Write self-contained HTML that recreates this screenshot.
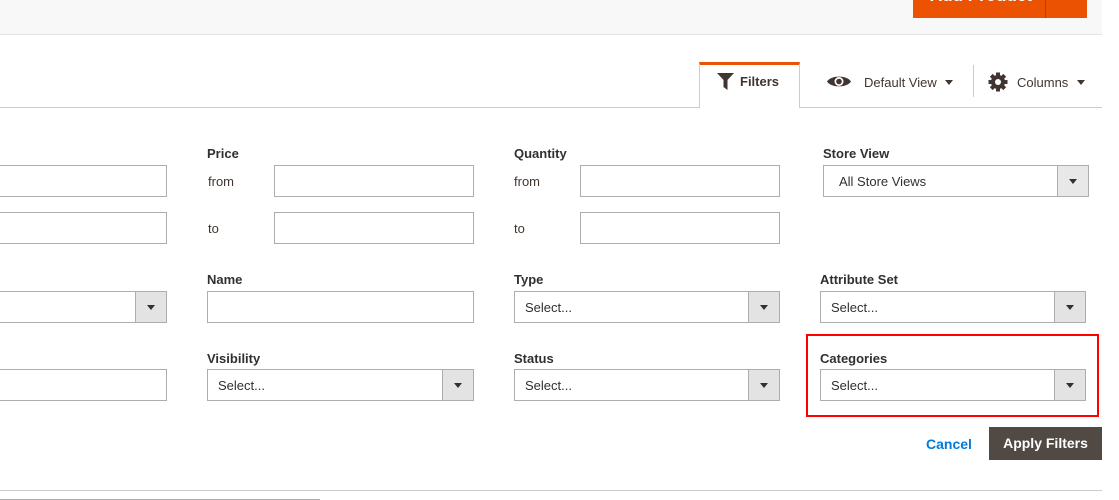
<!DOCTYPE html>
<html><head><style>
*{box-sizing:border-box;margin:0;padding:0}
body{width:1119px;height:500px;position:relative;overflow:hidden;background:#fff;font-family:"Liberation Sans",sans-serif;color:#303030}
.a{position:absolute}
.lbl{position:absolute;font-size:13px;font-weight:bold;color:#303030}
.t{position:absolute;font-size:13px;color:#41362f}
.in{position:absolute;height:32px;border:1px solid #adadad;background:#fff}
.sel{position:absolute;height:32px;border:1px solid #adadad;background:#fff;font-size:13px;color:#303030;padding:8px 0 0 10px}
.sel .ar{position:absolute;right:0;top:0;width:31px;height:30px;background:#e3e3e3;border-left:1px solid #adadad}
.sel .ar:after{content:"";position:absolute;left:11px;top:13px;border-left:4px solid transparent;border-right:4px solid transparent;border-top:5px solid #303030}
</style></head><body>
<div class="a" style="left:0;top:0;width:1102px;height:35px;background:#f8f8f8;border-bottom:1px solid #e3e3e3"></div>
<div class="a" style="left:913px;top:0;width:174px;height:18px;background:#eb5202;overflow:hidden">
  <div class="a" style="left:17px;top:-14px;font-size:17px;font-weight:bold;color:#fff;white-space:nowrap">Add Product</div>
  <div class="a" style="left:148px;top:-14px;font-size:17px;font-weight:bold;color:#fff">+</div>
</div>
<div class="a" style="left:1045px;top:0;width:1px;height:18px;background:#b84002"></div>

<div class="a" style="left:0;top:107px;width:1102px;height:1px;background:#ccc"></div>
<div class="a" style="left:699px;top:62px;width:101px;height:46px;background:#fff;border:1px solid #ccc;border-top:3px solid #eb5202;border-bottom:none"></div>
<svg class="a" style="left:717px;top:73px" width="18" height="17" viewBox="0 0 18 17"><path d="M0 0H17L10.5 7V17L6.5 14V7Z" fill="#41362f"/></svg>
<div class="a" style="left:740px;top:74px;font-size:13px;font-weight:bold;color:#41362f">Filters</div>
<svg class="a" style="left:827px;top:74px" width="24" height="15" viewBox="0 0 24 15"><path d="M0 7.5C4 1 20 1 24 7.5C20 14 4 14 0 7.5Z" fill="#41362f"/><circle cx="12" cy="7.5" r="4.5" fill="#fff"/><circle cx="12" cy="7.5" r="2.8" fill="#41362f"/></svg>
<div class="a" style="left:864px;top:75px;font-size:13px;color:#41362f">Default View</div>
<div class="a" style="left:945px;top:80px;border-left:4px solid transparent;border-right:4px solid transparent;border-top:5px solid #41362f"></div>
<div class="a" style="left:973px;top:65px;width:1px;height:32px;background:#ccc"></div>
<svg class="a" style="left:988px;top:72px" width="20" height="20" viewBox="0 0 20 20"><g fill="#41362f"><circle cx="10" cy="10" r="7"/><rect x="8" y="0.5" width="4" height="19"/><rect x="0.5" y="8" width="19" height="4"/><rect x="8" y="0.5" width="4" height="19" transform="rotate(45 10 10)"/><rect x="8" y="0.5" width="4" height="19" transform="rotate(-45 10 10)"/></g><circle cx="10" cy="10" r="3" fill="#fff"/></svg>
<div class="a" style="left:1017px;top:75px;font-size:13px;color:#41362f">Columns</div>
<div class="a" style="left:1077px;top:80px;border-left:4px solid transparent;border-right:4px solid transparent;border-top:5px solid #41362f"></div>

<div class="in" style="left:-2px;top:165px;width:169px"></div>
<div class="in" style="left:-2px;top:212px;width:169px"></div>
<div class="lbl" style="left:207px;top:146px">Price</div>
<div class="t" style="left:208px;top:174px">from</div>
<div class="t" style="left:208px;top:221px">to</div>
<div class="in" style="left:274px;top:165px;width:200px"></div>
<div class="in" style="left:274px;top:212px;width:200px"></div>
<div class="lbl" style="left:514px;top:146px">Quantity</div>
<div class="t" style="left:514px;top:174px">from</div>
<div class="t" style="left:514px;top:221px">to</div>
<div class="in" style="left:580px;top:165px;width:200px"></div>
<div class="in" style="left:580px;top:212px;width:200px"></div>
<div class="lbl" style="left:823px;top:146px">Store View</div>
<div class="sel" style="left:823px;top:165px;width:266px;padding-left:15px">All Store Views<div class="ar" style="background:#e8e8e8"></div></div>

<div class="sel" style="left:-2px;top:291px;width:169px"><div class="ar"></div></div>
<div class="lbl" style="left:207px;top:272px">Name</div>
<div class="in" style="left:207px;top:291px;width:267px"></div>
<div class="lbl" style="left:514px;top:272px">Type</div>
<div class="sel" style="left:514px;top:291px;width:266px">Select...<div class="ar"></div></div>
<div class="lbl" style="left:820px;top:272px">Attribute Set</div>
<div class="sel" style="left:820px;top:291px;width:266px">Select...<div class="ar"></div></div>

<div class="in" style="left:-2px;top:369px;width:169px"></div>
<div class="lbl" style="left:207px;top:351px">Visibility</div>
<div class="sel" style="left:207px;top:369px;width:267px">Select...<div class="ar"></div></div>
<div class="lbl" style="left:514px;top:351px">Status</div>
<div class="sel" style="left:514px;top:369px;width:266px">Select...<div class="ar"></div></div>
<div class="a" style="left:806px;top:334px;width:293px;height:83px;border:2px solid #f00"></div>
<div class="lbl" style="left:820px;top:351px">Categories</div>
<div class="sel" style="left:820px;top:369px;width:266px">Select...<div class="ar"></div></div>

<div class="a" style="left:926px;top:436px;font-size:14px;font-weight:bold;color:#007bdb">Cancel</div>
<div class="a" style="left:989px;top:427px;width:113px;height:33px;background:#514943;color:#fff;font-size:14px;font-weight:bold;text-align:center;line-height:33px">Apply Filters</div>

<div class="a" style="left:0;top:490px;width:1102px;height:1px;background:#ccc"></div>
<div class="a" style="left:0;top:499px;width:320px;height:1px;background:#adadad"></div>
</body></html>
